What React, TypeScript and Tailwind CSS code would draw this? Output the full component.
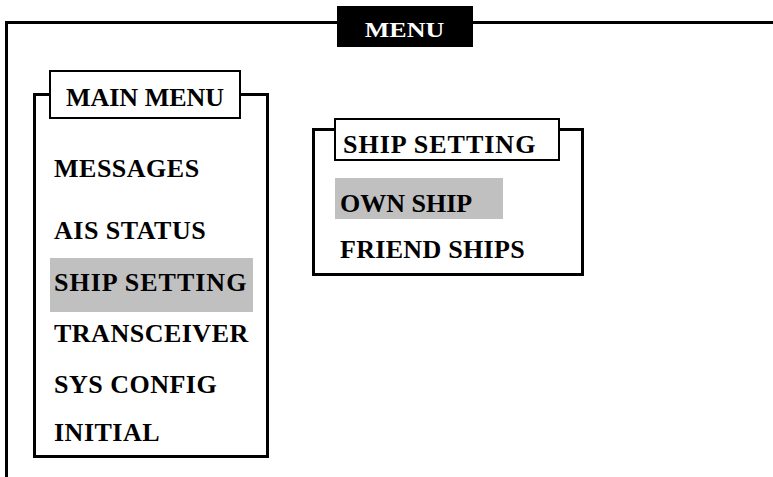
const MAIN_ITEMS = [
  { label: 'MESSAGES', h: 'h-[68px]' },
  { label: 'AIS STATUS', h: 'h-[56px]' },
  { label: 'SHIP SETTING', h: 'h-[54px]', active: true },
  { label: 'TRANSCEIVER', h: 'h-[42px]' },
  { label: 'SYS CONFIG', h: 'h-[60px]' },
  { label: 'INITIAL', h: 'h-[36px]' },
];

function MainMenu() {
  return (
    <div className="ml-[25px] mt-[46px]">
      <div className="relative mt-[23px] h-[365px] w-[236px] border-[3px] border-black">
        {/* title sits on the top edge */}
        <div className="absolute -top-[26px] left-[13px] flex h-[49px] w-[192px] items-center justify-center border-2 border-black bg-white pt-[5px]">
          <span className="leading-[29px]">MAIN MENU</span>
        </div>
        <div className="pl-[14px] pt-[38px]">
          {MAIN_ITEMS.map((item) => (
            <div
              key={item.label}
              className={
                item.active
                  ? `flex w-[203px] items-center bg-[#c0c0c0] pb-[5px] pl-[4px] tracking-[1px] ${item.h}`
                  : `flex w-[203px] items-center pl-[4px] tracking-[0.5px] ${item.h}`
              }
            >
              <span className="leading-[29px]">{item.label}</span>
            </div>
          ))}
        </div>
      </div>
    </div>
  );
}

function ShipSetting() {
  return (
    <div className="ml-[43px] mt-[94px]">
      <div className="relative mt-[10px] h-[148px] w-[272px] border-[3px] border-black">
        <div className="absolute -top-[13px] left-[19px] flex h-[43px] w-[226px] items-center border-2 border-black bg-white pl-[7px] pt-[10px] tracking-[1px]">
          <span className="leading-[29px]">SHIP SETTING</span>
        </div>
        <div className="ml-[20px] mt-[47px] flex h-[41px] w-[168px] items-center bg-[#c0c0c0] pl-[5px] pt-[9px]">
          <span className="leading-[29px]">OWN SHIP</span>
        </div>
        <div className="ml-[20px] mt-[12px] flex h-[36px] items-center pl-[5px] tracking-[0.3px]">
          <span className="leading-[29px]">FRIEND SHIPS</span>
        </div>
      </div>
    </div>
  );
}

export default function App() {
  return (
    <div className="h-[477px] w-[773px] overflow-hidden bg-white font-['Liberation_Serif',serif] text-[26px] font-bold text-black">
      <div className="relative ml-[5px] mt-[21px] h-[456px] border-l-[3px] border-t-[3px] border-black">
        <div className="absolute -top-[18px] left-[329px] flex h-[41px] w-[136px] items-center justify-center bg-black pt-[7px] text-white">
          <span className="inline-block scale-x-[1.3] text-[20px] leading-[24px]">MENU</span>
        </div>
        <div className="flex items-start">
          <MainMenu />
          <ShipSetting />
        </div>
      </div>
    </div>
  );
}
